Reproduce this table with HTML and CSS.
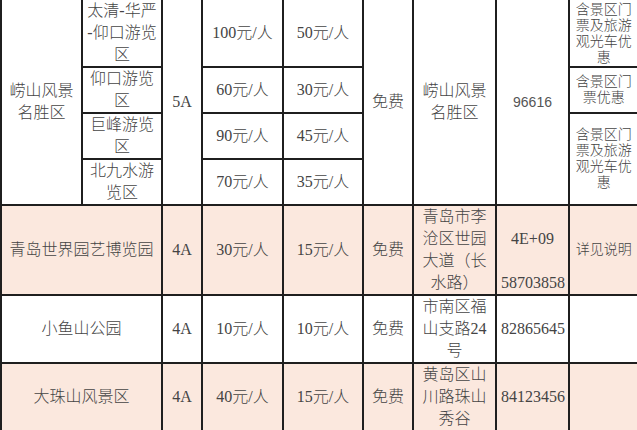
FILE: index.html
```html
<!DOCTYPE html>
<html lang="zh-CN">
<head>
<meta charset="utf-8">
<title>青岛景区门票</title>
<link rel="stylesheet" href="styles.css">
</head>
<body>
<table class="fees">
  <colgroup>
    <col class="c-name"><col class="c-sub"><col class="c-grade"><col class="c-price"><col class="c-half"><col class="c-free"><col class="c-addr"><col class="c-tel"><col class="c-note">
  </colgroup>
  <tbody>
    <tr class="r1">
      <td rowspan="4">崂山风景名胜区</td>
      <td class="sub-top">太清-华严<br>-仰口游览<br>区</td>
      <td rowspan="4" class="grade">5A</td>
      <td>100元/人</td>
      <td>50元/人</td>
      <td rowspan="4">免费</td>
      <td rowspan="4">崂山风景名胜区</td>
      <td rowspan="4" class="tel-sans">96616</td>
      <td class="note note-top">含景区门票及旅游观光车优惠</td>
    </tr>
    <tr class="r2">
      <td>仰口游览区</td>
      <td>60元/人</td>
      <td>30元/人</td>
      <td class="note">含景区门票优惠</td>
    </tr>
    <tr class="r3">
      <td>巨峰游览区</td>
      <td>90元/人</td>
      <td>45元/人</td>
      <td rowspan="2" class="note">含景区门票及旅游观光车优惠</td>
    </tr>
    <tr class="r4">
      <td>北九水游览区</td>
      <td>70元/人</td>
      <td>35元/人</td>
    </tr>
    <tr class="r5 pink">
      <td colspan="2">青岛世界园艺博览园</td>
      <td class="grade">4A</td>
      <td>30元/人</td>
      <td>15元/人</td>
      <td>免费</td>
      <td>青岛市李沧区世园大道（长水路）</td>
      <td class="tel-split">4E+09<br><br>58703858</td>
      <td class="note">详见说明</td>
    </tr>
    <tr class="r6">
      <td colspan="2">小鱼山公园</td>
      <td class="grade">4A</td>
      <td>10元/人</td>
      <td>10元/人</td>
      <td>免费</td>
      <td>市南区福山支路24号</td>
      <td>82865645</td>
      <td class="note"></td>
    </tr>
    <tr class="r7 pink">
      <td colspan="2">大珠山风景区</td>
      <td class="grade">4A</td>
      <td>40元/人</td>
      <td>15元/人</td>
      <td>免费</td>
      <td>黄岛区山川路珠山秀谷</td>
      <td>84123456</td>
      <td class="note"></td>
    </tr>
  </tbody>
</table>
</body>
</html>
```

FILE: styles.css
```css
html, body {
  margin: 0;
  padding: 0;
  background: #ffffff;
}

body {
  width: 637px;
  height: 430px;
  overflow: hidden;
  font-family: "Liberation Serif", "Noto Sans CJK SC", serif;
  color: #444444;
}

.fees {
  width: 637px;
  table-layout: fixed;
  border-collapse: collapse;
}

.c-name { width: 81px; }
.c-sub { width: 80px; }
.c-grade { width: 40px; }
.c-price { width: 81px; }
.c-half { width: 80px; }
.c-free { width: 50px; }
.c-addr { width: 83px; }
.c-tel { width: 73px; }
.c-note { width: 69px; }

.fees td {
  border: 2px solid #1f1f1f;
  padding: 0 4px;
  text-align: center;
  vertical-align: middle;
  font-size: 16px;
  font-weight: 300;
  line-height: 22px;
  overflow: hidden;
}

.fees tr.r1 td { border-top: none; }

.fees td.note {
  border-right: 1px solid #9a9a9a;
  padding: 0 4px;
  font-size: 14px;
  line-height: 16px;
}

.fees td.note-top { vertical-align: bottom; }

.r1 { height: 67px; }
.r2 { height: 46px; }
.r3 { height: 45px; }
.r4 { height: 45px; }
.r5 { height: 90px; }
.r6 { height: 68px; }
.r7 { height: 67px; }

.pink td { background: #fbe8de; }

.sub-top { vertical-align: bottom; }

.grade { font-size: 14px; }

.fees td.tel-sans {
  font-family: "Liberation Sans", "Noto Sans CJK SC", sans-serif;
  font-size: 14px;
  color: #555555;
}

.fees td.tel-split { vertical-align: bottom; }
```
